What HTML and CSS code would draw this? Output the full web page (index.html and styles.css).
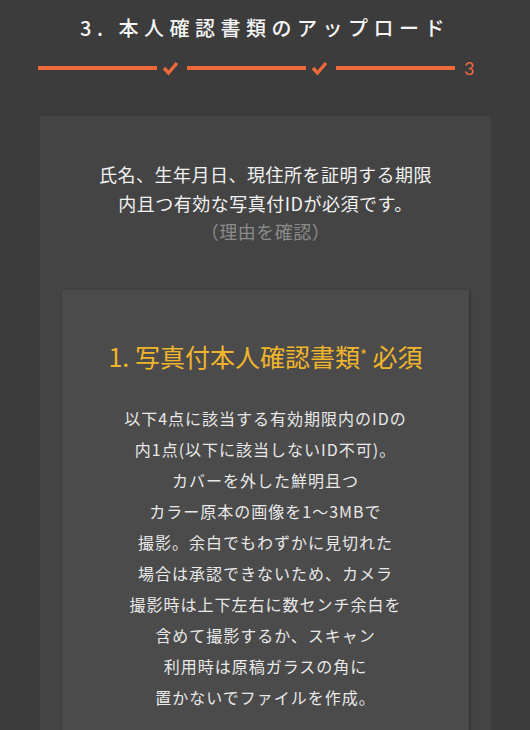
FILE: index.html
```html
<!DOCTYPE html>
<html lang="ja">
<head>
<meta charset="utf-8">
<title>本人確認書類のアップロード</title>
<link rel="stylesheet" href="styles.css">
</head>
<body>
<header class="header">
  <h1 class="title">3. 本人確認書類のアップロード</h1>
  <div class="progress">
    <span class="bar"></span>
    <span class="check"><svg width="30" height="16" viewBox="0 0 30 16"><polyline points="7,8 11.5,13 20,3" fill="none" stroke="#ee6a3c" stroke-width="3.4"/></svg></span>
    <span class="bar"></span>
    <span class="check"><svg width="30" height="16" viewBox="0 0 30 16"><polyline points="7,8 11.5,13 20,3" fill="none" stroke="#ee6a3c" stroke-width="3.4"/></svg></span>
    <span class="bar"></span>
    <span class="step">3</span>
  </div>
</header>
<main class="card">
  <p class="intro">氏名、生年月日、現住所を証明する期限<br>内且つ有効な写真付IDが必須です。<br><span class="note">（理由を確認）</span></p>
  <section class="panel">
    <h2 class="panel-title">1. 写真付本人確認書類<span class="ast">*</span> 必須</h2>
    <p class="panel-text">以下4点に該当する有効期限内のIDの<br>内1点(以下に該当しないID不可)。<br>カバーを外した鮮明且つ<br>カラー原本の画像を1～3MBで<br>撮影。余白でもわずかに見切れた<br>場合は承認できないため、カメラ<br>撮影時は上下左右に数センチ余白を<br>含めて撮影するか、スキャン<br>利用時は原稿ガラスの角に<br>置かないでファイルを作成。</p>
  </section>
</main>
</body>
</html>
```
FILE: styles.css
```css
html, body {
  margin: 0;
  padding: 0;
}
body {
  background: #3c3c3c;
  height: 730px;
  overflow: hidden;
  font-family: "Noto Sans CJK JP", "Noto Sans", sans-serif;
  color: #f0f0f0;
}
.header {
  padding-top: 13px;
}
.title {
  margin: 0;
  font-size: 20px;
  font-weight: 500;
  line-height: 30px;
  letter-spacing: 5.5px;
  text-align: center;
  color: #f4f4f4;
}
.progress {
  display: flex;
  align-items: center;
  height: 16px;
  margin-top: 17px;
  padding-left: 38px;
}
.bar {
  display: block;
  width: 119px;
  height: 4px;
  background: #ee6a3c;
}
.check {
  display: block;
  width: 30px;
  height: 16px;
}
.check svg {
  display: block;
}
.step {
  margin-left: 9px;
  font-family: Lato, "Noto Sans", sans-serif;
  font-size: 18px;
  line-height: 16px;
  color: #ee6a3c;
}
.card {
  width: 451px;
  box-sizing: border-box;
  margin: 40px 0 0 40px;
  padding: 44px 22px 0;
  background: #444444;
  height: 700px;
}
.intro {
  margin: 0;
  font-size: 18px;
  line-height: 28.5px;
  letter-spacing: 0.5px;
  text-align: center;
  color: #f2f2f2;
}
.note {
  color: #8a8a8a;
}
.panel {
  margin-top: 44px;
  padding-top: 48px;
  background: #4b4b4b;
  box-shadow: 1px 1px 3px rgba(0, 0, 0, 0.35);
  height: 600px;
}
.panel-title {
  margin: 0;
  font-size: 25px;
  font-weight: 400;
  line-height: 34px;
  text-align: center;
  color: #f0b52c;
}
.ast {
  font-size: 15px;
  vertical-align: 6px;
}
.panel-text {
  margin: 30px 0 0;
  font-size: 16px;
  line-height: 31px;
  letter-spacing: 1px;
  text-align: center;
  color: #e8e8e8;
}
```
